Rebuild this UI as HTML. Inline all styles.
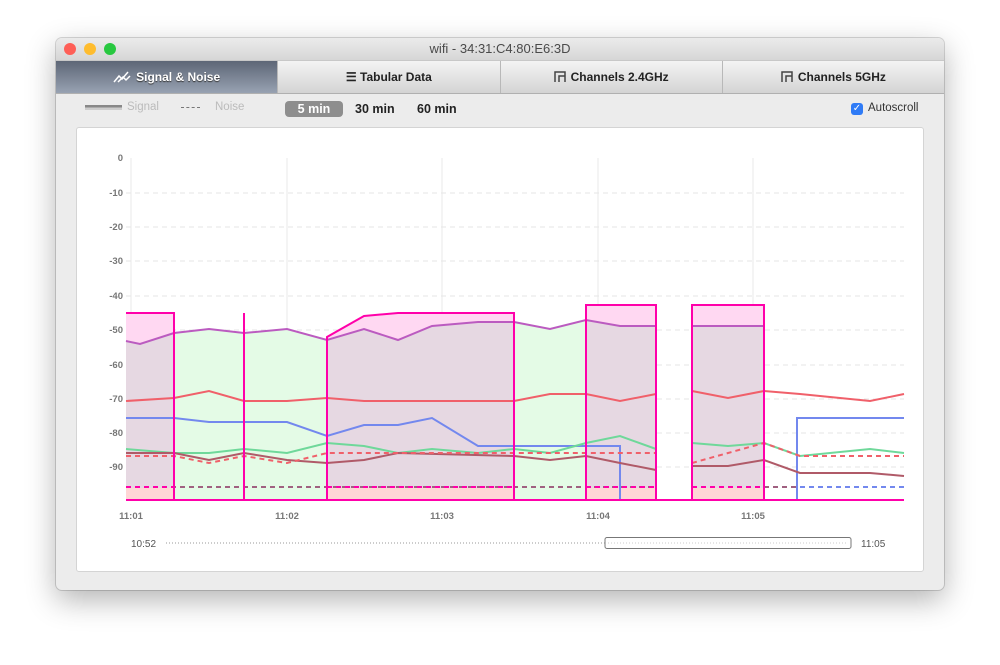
<!DOCTYPE html><html><head><style>
body{margin:0;width:1000px;height:665px;background:#fff;font-family:"Liberation Sans",sans-serif;position:relative;overflow:hidden}
.win{position:absolute;left:56px;top:38px;width:888px;height:552px;background:#ececec;border-radius:6px;box-shadow:0 10px 30px rgba(0,0,0,.3),0 0 0 1px rgba(0,0,0,.15);overflow:hidden}
.title{height:22px;background:linear-gradient(#ebebeb,#d6d6d6);text-align:center;font-size:13px;line-height:22px;color:#4a4a4a;position:relative}
.dot{position:absolute;top:5px;width:12px;height:12px;border-radius:50%}
.tabs{display:flex;height:32px;border-top:1px solid #c8c8c8;border-bottom:1px solid #b0b0b0}
.tab{flex:1;background:linear-gradient(#f4f4f4,#d4d4d4);border-right:1px solid #b8b8b8;font-size:12px;font-weight:bold;color:#222;display:flex;align-items:center;justify-content:center;gap:5px}
.tab.on{background:linear-gradient(#5d6676,#98a2b2);color:#fff;text-shadow:0 1px 1px #333}
.card{position:absolute;left:20px;top:89px;width:846px;height:443px;background:#fff;border:1px solid #d4d4d4;border-radius:3px}
.t{position:absolute;font-size:12.5px}
</style></head><body>
<div class="win">
<div class="title"><span class="dot" style="left:8px;background:#fe5f57"></span><span class="dot" style="left:28px;background:#febc2e"></span><span class="dot" style="left:48px;background:#28c840"></span>wifi - 34:31:C4:80:E6:3D</div>
<div class="tabs">
<div class="tab on"><svg width="18" height="12"><path d="M1 11 L6 5 L9 8 L15 1 M5 11 L10 6 L13 9 L17 5" stroke="#fff" stroke-width="1.5" fill="none"/></svg>Signal &amp; Noise</div>
<div class="tab">☰ Tabular Data</div>
<div class="tab"><svg width="12" height="12"><path d="M1 11V1h10v10M5 11V5h6" stroke="#444" stroke-width="1.5" fill="none"/></svg>Channels 2.4GHz</div>
<div class="tab" style="border-right:none"><svg width="12" height="12"><path d="M1 11V1h10v10M5 11V5h6" stroke="#444" stroke-width="1.5" fill="none"/></svg>Channels 5GHz</div>
</div>
<div style="position:absolute;left:29px;top:67px;width:37px;height:5px;background:linear-gradient(#888 50%,#ccc 50%)"></div>
<div class="t" style="left:71px;top:63px;color:#bbb;font-size:11.5px">Signal</div>
<div style="position:absolute;left:125px;top:69px;width:19px;border-top:1px dashed #777"></div>
<div class="t" style="left:159px;top:63px;color:#bbb;font-size:11.5px">Noise</div>
<div class="t" style="left:229px;top:63px;width:58px;height:16px;background:#8e8e8e;border-radius:4px;color:#fff;font-weight:bold;text-align:center;line-height:16px">5 min</div>
<div class="t" style="left:299px;top:64px;font-weight:bold;color:#222">30 min</div>
<div class="t" style="left:361px;top:64px;font-weight:bold;color:#222">60 min</div>
<div style="position:absolute;left:795px;top:65px;width:12px;height:12px;border-radius:3px;background:#2f7bf6;color:#fff;font-size:10px;text-align:center;line-height:12px">✓</div>
<div class="t" style="left:812px;top:64px;font-size:11.5px;color:#333">Autoscroll</div>
<div class="card"></div>
</div>
<svg style="position:absolute;left:0;top:0" width="1000" height="665" font-family="Liberation Sans" font-size="9.5" font-weight="bold" fill="#777">
<g stroke="#e6e6e6" stroke-dasharray="5,4">
<line x1="126" x2="904" y1="193" y2="193"/><line x1="126" x2="904" y1="227" y2="227"/><line x1="126" x2="904" y1="261" y2="261"/><line x1="126" x2="904" y1="296" y2="296"/><line x1="126" x2="904" y1="330" y2="330"/><line x1="126" x2="904" y1="365" y2="365"/><line x1="126" x2="904" y1="399" y2="399"/><line x1="126" x2="904" y1="433" y2="433"/><line x1="126" x2="904" y1="467" y2="467"/></g>
<g stroke="#e8e8e8"><line x1="131" x2="131" y1="158" y2="500"/><line x1="287" x2="287" y1="158" y2="500"/><line x1="442" x2="442" y1="158" y2="500"/><line x1="598" x2="598" y1="158" y2="500"/><line x1="753" x2="753" y1="158" y2="500"/></g>
<g text-anchor="end"><text x="123" y="161">0</text><text x="123" y="196">-10</text><text x="123" y="230">-20</text><text x="123" y="264">-30</text><text x="123" y="299">-40</text><text x="123" y="333">-50</text><text x="123" y="368">-60</text><text x="123" y="402">-70</text><text x="123" y="436">-80</text><text x="123" y="470">-90</text></g>
<g text-anchor="middle"><text x="131" y="519">11:01</text><text x="287" y="519">11:02</text><text x="442" y="519">11:03</text><text x="598" y="519">11:04</text><text x="753" y="519">11:05</text></g>
<polygon points="126,341 140,344 174,333 209,329 244,333 287,329 327,340 364,329 398,340 432,326 478,322 514,322 550,329 586,320 620,326 656,326 656,500 126,500" fill="#e4fbe6"/>
<polygon points="126,341 140,344 174,333 174,500 126,500" fill="#e6d8e2"/>
<polygon points="327,340 364,329 398,340 432,326 478,322 514,322 514,500 327,500" fill="#e6d8e2"/>
<polygon points="586,320 620,326 656,326 656,500 586,500" fill="#e6d8e2"/>
<rect x="692" y="326" width="72" height="174" fill="#e6d8e2"/>
<polygon points="126,313 174,313 174,333 140,344 126,341" fill="#ffd8f2"/>
<polygon points="327,337 364,316 398,313 514,313 514,322 478,322 432,326 398,340 364,329 327,340" fill="#ffd8f2"/>
<polygon points="586,305 656,305 656,326 620,326 586,320" fill="#ffd8f2"/>
<rect x="692" y="305" width="72" height="21" fill="#ffd8f2"/>
<g fill="#ffd6d6"><rect x="126" y="488" width="48" height="12"/><rect x="327" y="488" width="187" height="12"/><rect x="586" y="488" width="70" height="12"/><rect x="692" y="488" width="72" height="12"/></g>
<g fill="none" stroke-width="2">
<polyline stroke="#bb5bc0" points="126,341 140,344 174,333 209,329 244,333 287,329 327,340 364,329 398,340 432,326 478,322 514,322 550,329 586,320 620,326 656,326"/>
<polyline stroke="#bb5bc0" points="692,326 764,326"/>
<polyline stroke="#f0606a" points="126,401 174,398 209,391 244,401 287,401 327,398 364,401 514,401 550,394 586,394 620,401 656,394"/>
<polyline stroke="#f0606a" points="692,391 728,398 764,391 800,394 870,401 904,394"/>
<polyline stroke="#7388ee" points="126,418 174,418 209,422 287,422 327,436 364,425 398,425 432,418 478,446 620,446 620,500"/>
<polyline stroke="#7388ee" points="797,500 797,418 904,418"/>
<polyline stroke="#6fd89a" points="126,449 174,453 209,453 244,449 287,453 327,443 364,446 398,453 432,449 478,453 514,449 550,453 586,443 620,436 656,449"/>
<polyline stroke="#6fd89a" points="692,443 728,446 764,443 800,456 870,449 904,453"/>
<polyline stroke="#b05a68" points="126,453 174,453 209,460 244,453 287,460 327,463 364,460 398,453 514,456 550,460 586,456 620,463 656,470"/>
<polyline stroke="#b05a68" points="692,466 728,466 764,460 800,473 870,473 904,476"/>
<g stroke-dasharray="5,4"><polyline stroke="#f0606a" points="126,456 174,456 209,463 244,456 287,463 327,453 514,453 656,453"/>
<polyline stroke="#f0606a" points="692,463 764,443 800,456 904,456"/>
<line stroke="#a06080" x1="126" x2="656" y1="487" y2="487"/><line stroke="#a06080" x1="692" x2="800" y1="487" y2="487"/><line stroke="#7388ee" x1="800" x2="904" y1="487" y2="487"/>
<line stroke="#ff00aa" x1="126" x2="174" y1="487" y2="487"/><line stroke="#ff00aa" x1="327" x2="514" y1="487" y2="487"/><line stroke="#ff00aa" x1="586" x2="656" y1="487" y2="487"/><line stroke="#ff00aa" x1="692" x2="764" y1="487" y2="487"/></g>
<polyline stroke="#ff00aa" points="126,313 174,313 174,500"/>
<line stroke="#ff00aa" x1="244" x2="244" y1="313" y2="500"/>
<polyline stroke="#ff00aa" points="327,500 327,337 364,316 398,313 514,313 514,500"/>
<polyline stroke="#ff00aa" points="586,500 586,305 656,305 656,500"/>
<polyline stroke="#ff00aa" points="692,500 692,305 764,305 764,500"/>
<line stroke="#ff00aa" x1="126" x2="904" y1="500" y2="500"/>
</g>
<g font-weight="normal" fill="#555" font-size="10"><text x="131" y="547">10:52</text><text x="861" y="547">11:05</text></g>
<line x1="166" x2="605" y1="543" y2="543" stroke="#999" stroke-dasharray="1,2"/>
<rect x="605" y="537.5" width="246" height="11" rx="2" fill="#fff" stroke="#777"/>
<line x1="608" x2="848" y1="543" y2="543" stroke="#ccc" stroke-dasharray="1,2"/>
</svg>
</body></html>
